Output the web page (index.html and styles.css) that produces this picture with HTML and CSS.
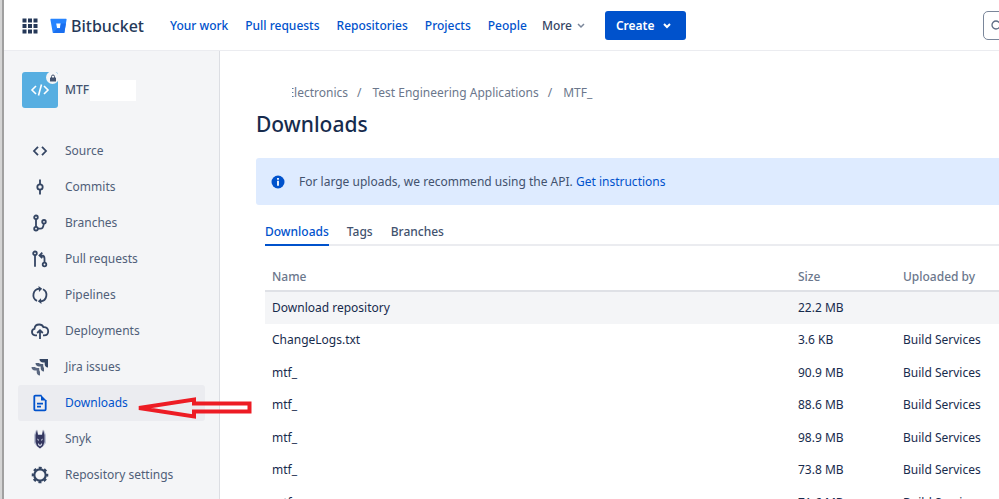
FILE: index.html
```
<!DOCTYPE html>
<html lang="en">
  <head>
    <meta charset="utf-8">
    <title>Downloads - Bitbucket</title>
    <link rel="stylesheet" href="styles.css">
  </head>
  <body>
    <div class="window-edge"></div>
    <div class="app">
      <header class="topbar">
        <button class="switcher" aria-label="Switch to">
          <svg width="16" height="16" viewBox="0 0 16 16" fill="#253858">
            <path d="M.5.500h4v4h-4zM6 .5h4v4H6zM11.500.500h4v4h-4zM.5 6h4v4h-4zM6 6h4v4H6zM11.500 6h4v4h-4zM.5 11.500h4v4h-4zM6 11.500h4v4H6zM11.500 11.500h4v4h-4z"/>
          </svg>
        </button>
        <a class="logo" href="#">
          <svg width="17" height="16" viewBox="0 0 17 16">
            <path d="M1 .8h15a.6.6 0 0 1 .6.7l-2.200 13a.7.7 0 0 1-.7.6H3.500a.8.8 0 0 1-.8-.7L.4 1.500A.6.6 0 0 1 1 .8zM6.200 5.400l.9 4.800h2.900l.8-4.800z" fill="#2684ff" fill-rule="evenodd"/>
            <path d="M15.900 5.400h-5.100L10 10.200H7.100l-3.900 4.700.3.200h10.200a.7.700 0 0 0 .7-.6z" fill="#1a6fef"/>
          </svg>
          <span>Bitbucket</span>
        </a>
        <nav class="topnav">
          <a href="#">Your work</a>
          <a href="#">Pull requests</a>
          <a href="#">Repositories</a>
          <a href="#">Projects</a>
          <a href="#">People</a>
        </nav>
        <button class="more">More
          <svg width="8" height="6" viewBox="0 0 8 6" fill="none" stroke="#7a869a" stroke-width="1.500"><path d="M1 1l3 3 3-3"/></svg>
        </button>
        <button class="create">Create
          <svg width="8" height="6" viewBox="0 0 8 6" fill="none" stroke="#fff" stroke-width="2"><path d="M1 1l3 3 3-3"/></svg>
        </button>
        <label class="search">
          <svg width="12" height="12" viewBox="0 0 12 12" fill="none" stroke="#5e6c84" stroke-width="1.300"><circle cx="5" cy="5" r="4"/><path d="M8 8l3 3"/></svg>
          <input type="search" aria-label="Search">
        </label>
      </header>

      <div class="body">
        <aside class="sidebar">
          <div class="repo">
            <div class="avatar">
              <svg width="20" height="14" viewBox="0 0 20 14" fill="none" stroke="#fff" stroke-width="1.600">
                <path d="M6 3L2 7l4 4M14 3l4 4-4 4M11.500 1.500l-3 11"/>
              </svg>
              <span class="lock">
                <svg width="8" height="8" viewBox="0 0 8 8"><path d="M2.500 4V2.500a1.500 1.500 0 0 1 3 0V4" fill="none" stroke="#42526e"/><rect x="1" y="3.500" width="6" height="4" rx=".5" fill="#42526e"/></svg>
              </span>
            </div>
            <span class="repo-name">MTF</span>
            <span class="redacted"></span>
          </div>
          <nav class="sidenav">
            <a href="#">
              <svg viewBox="0 0 20 20"><path d="M8 5.800L4 10l4 4.200M12 5.800l4 4.200-4 4.200"/></svg>
              Source
            </a>
            <a href="#">
              <svg viewBox="0 0 20 20"><circle cx="10" cy="10" r="2.700"/><path d="M10 2.500v4.800M10 12.700v4.800"/></svg>
              Commits
            </a>
            <a href="#">
              <svg viewBox="0 0 20 20"><circle cx="6" cy="4.300" r="1.800"/><circle cx="6" cy="15.700" r="1.800"/><circle cx="14" cy="8.800" r="1.800"/><path d="M6 6v8M7.800 15.700h2.500c2 0 3.200-1.500 3.400-5"/></svg>
              Branches
            </a>
            <a href="#">
              <svg viewBox="0 0 20 20"><circle cx="5" cy="4.300" r="1.800"/><circle cx="14.500" cy="15.500" r="1.800"/><path d="M5 6v11.700M14.500 13.700V9.500c0-2-1-3-3-3h-1.500M12.300 3.600L9.500 6.500l2.800 2.700"/></svg>
              Pull requests
            </a>
            <a href="#">
              <svg viewBox="0 0 20 20"><path d="M7 15.900A6.500 6.500 0 0 1 9.500 3.600M13 4.200a6.500 6.500 0 0 1-2.500 12.200"/><path d="M8.500 1l3.700 2.700-3.200 3.200zM11.500 19l-3.700-2.700L11 13.200z" fill="currentColor" stroke="none"/></svg>
              Pipelines
            </a>
            <a href="#">
              <svg viewBox="0 0 20 20"><path d="M7 14.300H5a3.300 3.300 0 0 1-.5-6.500c.2-2.500 2.200-4.300 4.700-4.300 2 0 3.500 1 4.200 2.700 2.700-.4 4.800 1.300 4.800 4 0 2.400-1.700 4.100-4 4.100H13M10 18V9.500M7.200 12L10 9.200l2.800 2.800"/></svg>
              Deployments
            </a>
            <a href="#">
              <svg viewBox="0 0 20 20">
                <g fill="currentColor" stroke="none">
                  <path d="M9.500 2H18v8.500c-2 0-3.300-1.500-3.300-3.300V5.500H13C11 5.500 9.500 4.200 9.500 2z"/>
                  <path d="M5.500 6H9c.5.600 1.700 1 3 1h1.200v1.500c0 1 .3 1.900.8 2.500v3.500c-2 0-3.300-1.500-3.300-3.300V9.500H9C7 9.500 5.500 8.200 5.500 6z" opacity=".85"/>
                  <path d="M1.500 10H5c.6.700 1.700 1 3 1h1.200v1.200c0 1 .3 2 .8 2.600v3.700c-2 0-3.300-1.500-3.300-3.300v-1.700H5c-2 0-3.500-1.300-3.500-3.500z" opacity=".8"/>
                </g>
              </svg>
              Jira issues
            </a>
            <a href="#" class="active">
              <svg viewBox="0 0 20 20"><path d="M11.500 2.700H5.300a1 1 0 0 0-1 1v12.600a1 1 0 0 0 1 1h9.400a1 1 0 0 0 1-1V7M7 10.700h6M7 13.700h4"/><path d="M11 2l5.500 5.500H11z" fill="currentColor" stroke="none"/></svg>
              Downloads
            </a>
            <a href="#">
              <svg viewBox="0 0 20 20">
                <g stroke="none">
                  <path d="M4 6l2-5 2 4h4l2-4 2 5v8l-3 3.500-3 2-3-2L4 14z" fill="#bcc3d5"/>
                  <path d="M7 .5L8 6h4l1-5.500L14.500 6v7l-1.500 4-3 2.500L7 17l-1.500-4V6z" fill="#343760"/>
                  <path d="M7.300 9.500l1.500 1v1.500L7.500 11zM12.700 9.500l-1.500 1v1.500l1.300-1zM8 14l2 2 2-2v2l-2 1.500L8 16z" fill="#c8cede"/>
                </g>
              </svg>
              Snyk
            </a>
            <a href="#">
              <svg viewBox="0 0 20 20"><circle cx="10" cy="10" r="5.700" stroke-width="2.200"/><circle cx="10" cy="10" r="7.200" stroke-width="2.200" stroke-dasharray="3 2.655" stroke-dashoffset="1.500"/></svg>
              Repository settings
            </a>
          </nav>
          <svg class="arrow" width="118" height="22" viewBox="0 0 118 22">
            <path d="M3 11L58 2.500V6.500H113.500V14.500H58V19.500z" fill="none" stroke="#ed1c24" stroke-width="4"/>
          </svg>
        </aside>

        <main class="content">
          <nav class="breadcrumbs">
            <a href="#" class="clipped"><span>Electronics</span></a>
            <span class="slash">/</span>
            <a href="#">Test Engineering Applications</a>
            <span class="slash">/</span>
            <a href="#">MTF_</a>
          </nav>
          <h1>Downloads</h1>
          <div class="banner">
            <svg width="14" height="14" viewBox="0 0 14 14"><circle cx="7" cy="7" r="6.500" fill="#0052cc"/><path d="M6.100 3h1.800v1.700H6.100zM6.100 5.800h1.800v5H6.100z" fill="#fff"/></svg>
            <p>For large uploads, we recommend using the API. <a href="#">Get instructions</a></p>
          </div>
          <section class="panel">
            <nav class="tabs">
              <a href="#" class="selected">Downloads</a>
              <a href="#">Tags</a>
              <a href="#">Branches</a>
            </nav>
            <table class="files">
              <thead>
                <tr><th class="col-name">Name</th><th class="col-size">Size</th><th>Uploaded by</th></tr>
              </thead>
              <tbody>
                <tr class="highlight"><td>Download repository</td><td>22.2 MB</td><td></td></tr>
                <tr><td>ChangeLogs.txt</td><td>3.6 KB</td><td>Build Services</td></tr>
                <tr><td>mtf_</td><td>90.9 MB</td><td>Build Services</td></tr>
                <tr><td>mtf_</td><td>88.6 MB</td><td>Build Services</td></tr>
                <tr><td>mtf_</td><td>98.9 MB</td><td>Build Services</td></tr>
                <tr><td>mtf_</td><td>73.8 MB</td><td>Build Services</td></tr>
                <tr><td>mtf_</td><td>71.6 MB</td><td>Build Services</td></tr>
              </tbody>
            </table>
          </section>
        </main>
      </div>
    </div>
  </body>
</html>
```
FILE: styles.css
```
* {
  box-sizing: border-box;
}

body {
  display: flex;
  height: 100vh;
  margin: 0;
  overflow: hidden;
  background: #fff;
  color: #172b4d;
  font-family: "Noto Sans", "Open Sans", sans-serif;
  font-size: 12px;
  line-height: 20px;
}

a {
  color: #0052cc;
  text-decoration: none;
}

button {
  border: 0;
  padding: 0;
  background: none;
  font: inherit;
  cursor: pointer;
}

svg {
  display: block;
  flex-shrink: 0;
}

.window-edge {
  flex: 0 0 4px;
  background: #d4d4d4;
  border-right: 2px solid #a0a0a0;
}

.app {
  flex: 1;
  min-width: 0;
  display: flex;
  flex-direction: column;
}

/* top bar */

.topbar {
  display: flex;
  align-items: center;
  flex: 0 0 51px;
  padding: 1px 0 0 18px;
  border-bottom: 1px solid #ebecf0;
  white-space: nowrap;
  font-weight: 500;
  overflow: hidden;
}

.logo {
  display: flex;
  align-items: center;
  flex: 0 0 120px;
  gap: 4px;
  margin-left: 12px;
  color: #253858;
  font-size: 16px;
}

.topnav {
  display: flex;
  gap: 17px;
}

.more {
  display: flex;
  align-items: center;
  gap: 5px;
  margin-left: 15px;
  color: #344563;
  font-weight: 500;
}

.create {
  display: flex;
  align-items: center;
  justify-content: space-between;
  flex: 0 0 81px;
  height: 29px;
  margin-left: 20px;
  padding: 0 15px 0 11px;
  border-radius: 3px;
  background: #0052cc;
  color: #fff;
  font-weight: 600;
}

.search {
  display: flex;
  align-items: center;
  flex: 0 0 200px;
  height: 29px;
  margin-left: 297px;
  padding-left: 7px;
  border: 1px solid #7a869a;
  border-radius: 5px;
}

.search input {
  width: 100%;
  border: 0;
  outline: 0;
  background: none;
  font: inherit;
}

.body {
  display: flex;
  flex: 1;
  min-height: 0;
}

/* sidebar */

.sidebar {
  position: relative;
  flex: 0 0 216px;
  padding: 21px 14px 0;
  background: #f4f5f7;
  border-right: 1px solid #dcdee3;
}

.repo {
  display: flex;
  align-items: center;
  padding-left: 4px;
  margin-bottom: 25px;
}

.avatar {
  position: relative;
  display: flex;
  align-items: center;
  justify-content: center;
  width: 36px;
  height: 36px;
  border-radius: 3px;
  background: #57aee1;
}

.lock {
  position: absolute;
  top: -1px;
  right: -1px;
  display: flex;
  align-items: center;
  justify-content: center;
  width: 13px;
  height: 13px;
  border-radius: 50%;
  background: #f4f5f7;
}

.repo-name {
  width: 25px;
  margin-left: 7px;
  color: #42526e;
  font-weight: 500;
}

.redacted {
  width: 46px;
  height: 21px;
  background: #fff;
}

.sidenav a {
  display: flex;
  align-items: center;
  gap: 15px;
  height: 36px;
  padding-left: 12px;
  border-radius: 3px;
  color: #505f79;
}

.sidenav svg {
  width: 20px;
  height: 20px;
  color: #344563;
  fill: none;
  stroke: currentColor;
  stroke-width: 1.8;
}

.sidenav .active {
  background: #ebecf0;
  color: #0052cc;
}

.sidenav .active svg {
  color: #0052cc;
}

/* red marker lying over the sidebar edge */
.arrow {
  position: absolute;
  top: 346px;
  left: 132px;
  z-index: 1;
}

/* main column */

.content {
  flex: 1;
  min-width: 0;
  padding: 32px 0 0 36px;
  overflow: hidden;
}

.breadcrumbs {
  display: flex;
  gap: 9px;
  padding-left: 36px;
  color: #6b778c;
}

.breadcrumbs a {
  color: #6b778c;
}

.slash {
  margin-right: 2px;
}

.clipped {
  display: flex;
  justify-content: flex-end;
  width: 56px;
  overflow: hidden;
}

h1 {
  margin: 5px 0 18px;
  font-size: 21px;
  font-weight: 500;
  line-height: 32px;
}

.banner {
  display: flex;
  align-items: center;
  gap: 14px;
  height: 47px;
  padding-left: 15px;
  border-radius: 3px 0 0 3px;
  background: #deebff;
  color: #42526e;
}

.banner p {
  margin: 0;
}

.panel {
  padding: 17px 0 0 9px;
}

.tabs {
  display: flex;
  gap: 18px;
  height: 24px;
  border-bottom: 2px solid #ebecf0;
  font-weight: 500;
}

.tabs a {
  height: 24px;
  color: #42526e;
}

.tabs .selected {
  border-bottom: 2px solid #0052cc;
  color: #0052cc;
}

.files {
  width: 100%;
  margin-top: 18px;
  border-collapse: collapse;
  table-layout: fixed;
}

.files th,
.files td {
  padding: 6px 0 6px 7px;
  text-align: left;
}

.files th {
  padding-top: 3px;
  padding-bottom: 3px;
  border-bottom: 2px solid #dfe1e6;
  color: #6b778c;
  font-weight: 500;
}

.files tbody tr:nth-child(even) td {
  padding-bottom: 7px;
}

.col-name {
  width: 526px;
}

.col-size {
  width: 105px;
}

.highlight {
  background: #f4f5f7;
}
```
